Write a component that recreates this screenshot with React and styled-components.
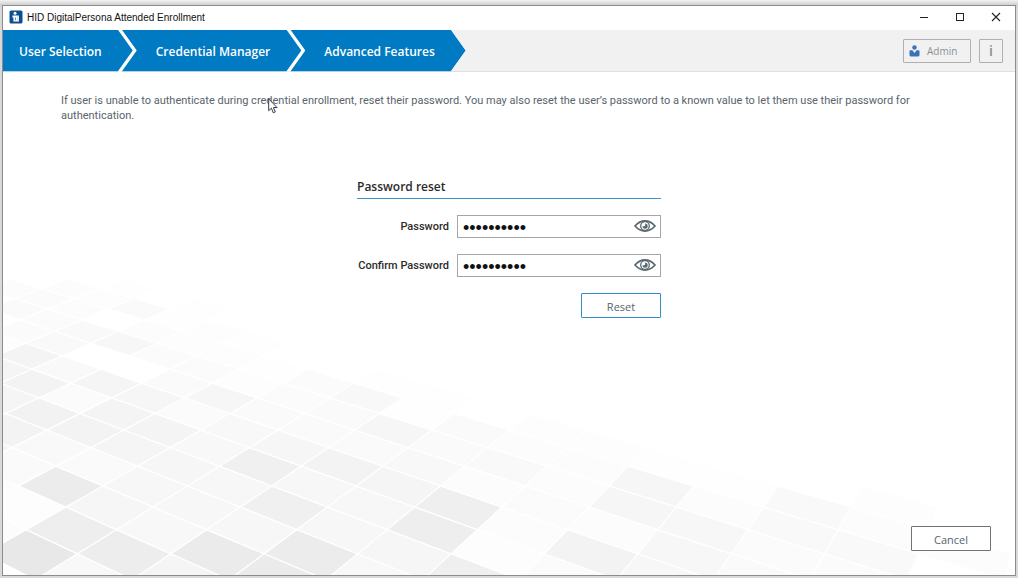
import React, { useState } from "react";
import styled, { createGlobalStyle } from "styled-components";

const GlobalStyle = createGlobalStyle`
  * {
    box-sizing: border-box;
  }
  body {
    margin: 0;
    background: #d9d9d9;
    font-family: "Open Sans", "Noto Sans", sans-serif;
    font-size: 11px;
    color: #58646c;
  }
  button, input {
    font-family: inherit;
  }
`;

const Desktop = styled.div`
  display: flex;
  min-height: 100vh;
  padding: 5px 2px 2px;
  background: linear-gradient(#f2f2f2, #cfcfcf 5px, #d9d9d9 8px);
`;

const Window = styled.div`
  position: relative;
  display: flex;
  flex: 1;
  flex-direction: column;
  overflow: hidden;
  background: #fff;
  border: 1px solid #8c8c8c;
`;

const TitleBar = styled.header`
  display: flex;
  align-items: center;
  height: 24px;
  padding: 0 1px 2px 6px;
`;

const Title = styled.h1`
  flex: 1;
  margin: 0 0 0 4px;
  font-family: "Liberation Sans", sans-serif;
  font-size: 10px;
  font-weight: 400;
  color: #111;
`;

const WindowButton = styled.button`
  display: flex;
  align-items: center;
  justify-content: center;
  width: 36px;
  height: 22px;
  padding: 0;
  background: none;
  border: 0;
`;

const NavBar = styled.nav`
  display: flex;
  align-items: center;
  justify-content: space-between;
  height: 42px;
  padding-right: 12px;
  background: #f1f1f1;
  border-bottom: 1px solid #e0e0e0;
`;

const Steps = styled.ol`
  display: flex;
  height: 42px;
  margin: 0;
  padding: 0;
  list-style: none;
  background: #fff;
  clip-path: polygon(0 0, calc(100% - 15px) 0, 100% 50%, calc(100% - 15px) 100%, 0 100%);
`;

const Step = styled.li`
  margin-left: ${(props) => (props.$first ? "0" : "-11px")};
`;

const StepLink = styled.a`
  display: flex;
  align-items: center;
  height: 42px;
  padding: 2px 31px 0 ${(props) => (props.$first ? "16px" : "34px")};
  background: #007ac2;
  color: #fff;
  font-size: 12px;
  font-weight: 600;
  text-decoration: none;
  white-space: nowrap;
  clip-path: polygon(
    0 0,
    calc(100% - 15px) 0,
    100% 50%,
    calc(100% - 15px) 100%,
    0 100%,
    ${(props) => (props.$first ? "0 50%" : "15px 50%")}
  );
`;

const NavActions = styled.div`
  display: flex;
  gap: 8px;
`;

const NavButton = styled.button`
  display: flex;
  align-items: center;
  justify-content: ${(props) => (props.$square ? "center" : "flex-start")};
  gap: 6px;
  width: ${(props) => (props.$square ? "24px" : "68px")};
  height: 24px;
  padding: ${(props) => (props.$square ? "0" : "0 5px")};
  background: #f1f1f1;
  border: 1px solid #b0b0b0;
  border-radius: 1px;
  color: #8b9094;
  font-size: ${(props) => (props.$square ? "14px" : "10px")};
  font-weight: ${(props) => (props.$square ? "600" : "400")};
`;

const Content = styled.main`
  position: relative;
  z-index: 1;
  display: flex;
  flex: 1;
  flex-direction: column;
  padding: 21px 24px 24px 58px;
`;

const Description = styled.p`
  margin: 0 34px 0 0;
  font-family: Roboto, sans-serif;
  font-size: 11px;
  line-height: 15px;
`;

const ResetForm = styled.form`
  display: flex;
  flex-direction: column;
  align-self: center;
  width: 304px;
  margin: 56px 34px 0 0;
`;

const FormTitle = styled.h2`
  margin: 0 0 16px;
  padding-bottom: 3px;
  border-bottom: 1px solid #3f93c8;
  color: #2b2b2b;
  font-size: 12px;
  font-weight: 600;
  line-height: 16px;
`;

const Field = styled.div`
  display: flex;
  align-items: center;
  justify-content: flex-end;
  gap: 8px;
  margin-bottom: 16px;
`;

const Label = styled.label`
  color: #2b2b2b;
  font-family: Roboto, sans-serif;
  font-size: 11px;
  font-weight: 500;
  white-space: nowrap;
`;

const InputBox = styled.div`
  display: flex;
  align-items: center;
  width: 204px;
  height: 23px;
  padding: 0 4px 0 5px;
  background: #fff;
  border: 1px solid #a6a6a6;
`;

const PasswordInput = styled.input`
  flex: 1;
  min-width: 0;
  height: 21px;
  padding: 4px 0 0;
  background: none;
  border: 0;
  outline: 0;
  color: #111;
  font-family: "Liberation Sans", sans-serif;
  font-size: 18px;
`;

const EyeButton = styled.button`
  display: flex;
  padding: 0 0 2px;
  background: none;
  border: 0;
`;

const FormButton = styled.button`
  align-self: flex-end;
  width: 80px;
  height: 25px;
  padding: 2px 0 0;
  background: #fff;
  border: 1px solid ${(props) => (props.$primary ? "#2f8ec6" : "#6b747a")};
  border-radius: 1px;
  color: #58646c;
  font-size: 11px;
`;

const Footer = styled.footer`
  display: flex;
  justify-content: flex-end;
  margin-top: auto;
`;

const Backdrop = styled.svg`
  position: absolute;
  left: 0;
  bottom: 0;
`;

const Pointer = styled.svg`
  position: absolute;
  left: 265px;
  top: 92px;
  z-index: 2;
  pointer-events: none;
`;

// Floor tiles, one entry per horizontal row of diamonds: depth, first column, greys
const tileRows = [
  [4, -2, ["f8", "f5", "eb", "f8", "ef", "fb", "f7", "fa", "fb"]],
  [3, -2, ["e8", "ed", "eb", "ec", "f6", "fd", "f3", "f7", "fb", "f9", "fc"]],
  [2, -2, ["fc", "ee", "f8", "f7", "f7", "ee", "fc", "fc", "f7", "f9", "fc"]],
  [1, -1, ["fd", "f6", "f7", "f0", "f7", "ef", "fb", "f6", "fc", "f9", "fd"]],
  [0, -1, ["fc", "ec", "f7", "f7", "f7", "f5", "fc", "fc", "f6", "fe"]],
  [-1, 0, ["fa", "fa", "f6", "f0", "f3", "f8", "f9", "fc", "fe"]],
  [-2, 0, ["f5", "f9", "f5", "f8", "f6", "fa", "fa", "fc", "fd"]],
  [-3, 1, ["f3", "f3", "f4", "f8", "fa", "f6", "fa", "fd"]],
  [-4, 1, ["f4", "f2", "f4", "fb", "fa", "fa", "fe"]],
  [-5, 2, ["f5", "fb", "f6", "f6", "fb", "f8", "fe"]],
  [-6, 3, ["f3", "f5", "fa", "fd", "fb", "fe"]],
  [-7, 3, ["f5", "f9", "ff", "fb", "fe"]],
  [-8, 4, ["f4", "ff", "fb", "fd"]],
  [-9, 4, ["fd", "f9", "f7", "fd", "fe"]],
  [-10, 5, ["fb", "f9", "fc", "fd"]],
  [-11, 6, ["fb", "ff", "fe"]],
  [-12, 6, ["fa", "fc", "fa", "fe"]],
  [-13, 7, ["fb", "fd"]],
  [-14, 7, ["fc", "fc", "fe"]],
];

const corner = (depth, column) => {
  const scale = 2625 / (31.1 - depth);
  const x = scale * (16.9 + column) - 1408;
  const y = scale * 7.53 - 149.7;
  return `${x.toFixed(1)},${y.toFixed(1)}`;
};

const TileFloor = () => (
  <Backdrop width="1012" height="375" viewBox="3 200 1012 375" aria-hidden="true">
    {tileRows.map(([depth, first, greys]) =>
      greys.map((grey, index) => {
        const column = first + index;
        const points = [
          corner(depth, column),
          corner(depth - 1, column + 1),
          corner(depth, column + 1),
          corner(depth + 1, column),
        ];
        return (
          <polygon
            key={`${depth}:${column}`}
            points={points.join(" ")}
            fill={`#${grey}${grey}${grey}`}
            stroke="#fff"
            strokeWidth="1.2"
          />
        );
      })
    )}
  </Backdrop>
);

const AppLogo = () => (
  <svg width="14" height="14" viewBox="0 0 14 14" aria-hidden="true">
    <rect x="0.5" y="0.5" width="13" height="13" rx="1.5" fill="#0b4f91" />
    <circle cx="6" cy="3.2" r="1.5" fill="#fff" />
    <path d="M3.4 5.4h5v6.100H4.400V7.400h-1z" fill="#fff" />
    <path d="M8 5.400h2v6.100H8z" fill="#dbe9f5" />
    <path d="M6 7.600h1v2.600H6z" fill="#5a94c8" />
  </svg>
);

const UserIcon = () => (
  <svg width="12" height="12" viewBox="0 0 12 12" aria-hidden="true">
    <circle cx="5.5" cy="2.5" r="2.2" fill="#3a73b9" />
    <path
      d="M1.4 5.2h2L5.5 8l2.100-2.800h2q.9 0 .9 1v3.900q0 1.400-1.300 1.400H1.800Q.5 11.500.5 10.100V6.200q0-1 .9-1z"
      fill="#3a73b9"
    />
  </svg>
);

const EyeIcon = () => (
  <svg width="22" height="12" viewBox="0 0 22 12" fill="none" aria-hidden="true">
    <path
      d="M1 6C4 2.6 7 .9 11 .9S18 2.6 21 6c-3 3.4-6 5.1-10 5.1S4 9.4 1 6z"
      stroke="#5b6870"
      strokeWidth="1.7"
    />
    <circle cx="11" cy="6" r="4.3" stroke="#5b6870" strokeWidth="1.3" />
    <path d="M11.3 3.4A2.7 2.7 0 1 1 8.4 6.4L11 6z" fill="#5b6870" />
  </svg>
);

const steps = ["User Selection", "Credential Manager", "Advanced Features"];

const PasswordField = ({ id, label }) => {
  const [value, setValue] = useState("password12");
  const [visible, setVisible] = useState(false);

  return (
    <Field>
      <Label htmlFor={id}>{label}</Label>
      <InputBox>
        <PasswordInput
          id={id}
          type={visible ? "text" : "password"}
          value={value}
          onChange={(e) => setValue(e.target.value)}
        />
        <EyeButton
          type="button"
          aria-label="Show password"
          onClick={() => setVisible(!visible)}
        >
          <EyeIcon />
        </EyeButton>
      </InputBox>
    </Field>
  );
};

export default function App() {
  return (
    <>
      <GlobalStyle />
      <Desktop>
        <Window>
          <TileFloor />
          <TitleBar>
            <AppLogo />
            <Title>HID DigitalPersona Attended Enrollment</Title>
            <WindowButton aria-label="Minimize">
              <svg width="10" height="10" viewBox="0 0 10 10">
                <path d="M1 5.5h8" stroke="#222" />
              </svg>
            </WindowButton>
            <WindowButton aria-label="Maximize">
              <svg width="10" height="10" viewBox="0 0 10 10">
                <rect x="1.5" y="1.5" width="7" height="7" fill="none" stroke="#222" />
              </svg>
            </WindowButton>
            <WindowButton aria-label="Close">
              <svg width="10" height="10" viewBox="0 0 10 10">
                <path d="M1 1l8 8M9 1l-8 8" stroke="#222" strokeWidth="1.1" />
              </svg>
            </WindowButton>
          </TitleBar>
          <NavBar>
            <Steps>
              {steps.map((step, index) => (
                <Step key={step} $first={index === 0}>
                  <StepLink href="#" $first={index === 0}>
                    {step}
                  </StepLink>
                </Step>
              ))}
            </Steps>
            <NavActions>
              <NavButton>
                <UserIcon />
                Admin
              </NavButton>
              <NavButton $square>i</NavButton>
            </NavActions>
          </NavBar>
          <Content>
            <Description>
              If user is unable to authenticate during credential enrollment, reset their
              password. You may also reset the user’s password to a known value to let them
              use their password for authentication.
            </Description>
            <ResetForm onSubmit={(e) => e.preventDefault()}>
              <FormTitle>Password reset</FormTitle>
              <PasswordField id="password" label="Password" />
              <PasswordField id="confirm" label="Confirm Password" />
              <FormButton $primary>Reset</FormButton>
            </ResetForm>
            <Footer>
              <FormButton type="button">Cancel</FormButton>
            </Footer>
          </Content>
          <Pointer width="10" height="16" viewBox="0 0 10 16" aria-hidden="true">
            <path
              d="M.7.9v11.8l2.7-2.5 1.9 4.6 2-.9-1.9-4.3h3.7z"
              fill="#fff"
              stroke="#333a44"
            />
          </Pointer>
        </Window>
      </Desktop>
    </>
  );
}
